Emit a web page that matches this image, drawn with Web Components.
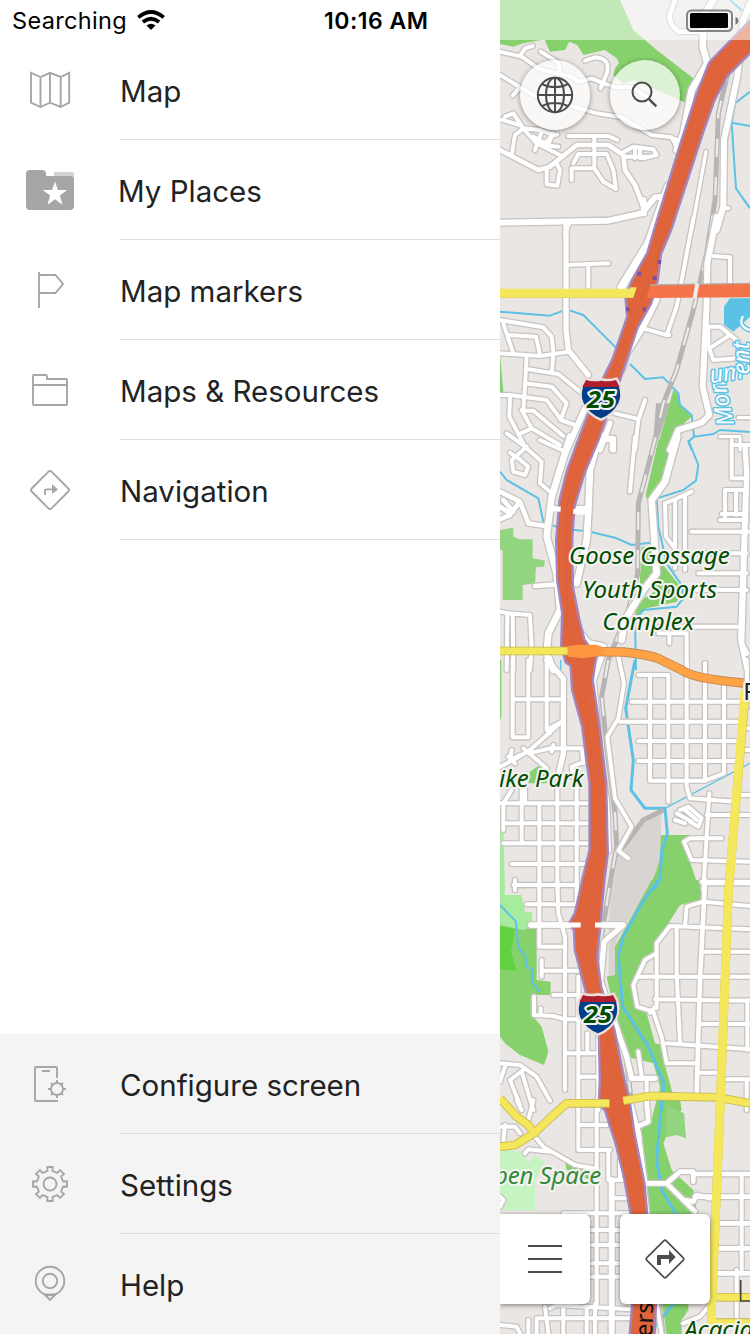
<!DOCTYPE html>
<html lang="en"><head><meta charset="utf-8"><title>Map menu</title>
<style>html,body{margin:0;height:100%;overflow:hidden}body{font-family:Inter,"Liberation Sans",sans-serif}</style></head>
<body><map-app></map-app>
<script>
const define=(name,html,after)=>customElements.define(name,class extends HTMLElement{
  connectedCallback(){ if(this.shadowRoot)return; const t=document.createElement('template'); t.innerHTML=typeof html==='function'?html(this):html;
    this.attachShadow({mode:'open'}).append(t.content.cloneNode(true)); }
});
const gear=()=>{let p='';for(let i=0;i<8;i++){const a=i*45;[[-15.5,13.2],[-10.5,13.6],[-9,17.2],[9,17.2],[10.5,13.6],[15.5,13.2]].forEach(([d,r])=>{const t=(a+d-90)*Math.PI/180;p+=(p?'L':'M')+(24+r*Math.cos(t)).toFixed(2)+' '+(24+r*Math.sin(t)).toFixed(2)})}return p+'Z'};
const ICONS={
 map:'<path d="M5 6.8 14.5 11 24 6.8 34.7 11 43.2 6.8V36.7L34.7 41 24 36.7 14.5 41 5 36.7ZM14.5 11V41M24 7V37M34.7 11V41"/>',
 places:'<g stroke="none"><path fill="#d3d3d3" d="M28 11V6H46a2 2 0 0 1 2 2V14Z"/><path fill="#a6a6a6" d="M4 4H16a4 4 0 0 1 4 4V10H44a4 4 0 0 1 4 4V40a4 4 0 0 1-4 4H4a4 4 0 0 1-4-4V8A4 4 0 0 1 4 4Z"/><path fill="#fff" d="M29 15.5 31.9 24H41.2L33.8 29.5 36.5 38.7 29 33.3 21.5 38.7 24.2 29.5 16.8 24H26.1Z"/></g>',
 flag:'<path d="M13 6V42M13 9H29.5L37 18 29.5 27H13"/>',
 folder:'<path d="M8 9H19.5Q21 9 21 10.5V13H40Q41 13 41 14V38Q41 39 40 39H8Q7 39 7 38V10Q7 9 8 9ZM7 19H41"/>',
 sign:'<path d="M22.5 5.7 5.7 22.5Q4.2 24 5.7 25.5L22.5 42.3Q24 43.8 25.5 42.3L42.3 25.5Q43.8 24 42.3 22.5L25.5 5.7Q24 4.2 22.5 5.7Z"/><path d="M19 29V24Q19 23.4 20 23.4H27"/><path fill="#a6a6a6" stroke="none" d="M26 18 32 23.4 26 28Z"/>',
 config:'<path d="M31 18V8Q31 7 30 7H10Q9 7 9 8V40Q9 41 10 41H32M16 11H24"/><circle cx="31" cy="29" r="6"/><path d="M31 20V23M31 35V38M22 29H25M37 29H40M25 23 27 25M35 33 37 35M25 35 27 33M35 25 37 23"/>',
 gear:'<path d="'+gear()+'"/><circle cx="24" cy="24" r="6.5"/>',
 help:'<circle cx="24" cy="21" r="14.3"/><circle cx="24" cy="21" r="7.2"/><path d="M18.5 34.5 24 40 29.5 34.5Z"/>'
};
define('menu-icon',e=>`<style>:host{display:block;width:48px;height:48px}svg{display:block;fill:none;stroke:#a6a6a6;stroke-width:1.9}</style><svg width="48" height="48" viewBox="0 0 48 48">${ICONS[e.getAttribute('name')]}</svg>`);
define('menu-item',e=>`<style>:host{display:grid;grid-template-columns:120px 1fr;height:100px}menu-icon{margin:26px}
div{border-bottom:1px solid #dfdfe1;height:99px;line-height:102px;font-size:29.5px;color:#222;letter-spacing:var(--ls,0);white-space:nowrap;text-indent:var(--shift,0)}
:host([last]) div{border-color:transparent}</style><menu-icon name="${e.getAttribute('icon')}"></menu-icon><div><slot></slot></div>`);
define('phone-status',`<style>:host{display:flex;height:40px;box-sizing:border-box;align-items:center;color:#000;font-size:23.5px;white-space:nowrap;padding-left:12px}
.s{width:125px;letter-spacing:.35px}.t{margin-left:159px;font-weight:600;font-size:23px;letter-spacing:.5px}span{margin-top:1px}</style><span class="s">Searching</span><svg width="28" height="20" viewBox="0 0 28 20" fill="none" stroke="#000" stroke-width="3.7"><path d="M1.3 7.3Q14-3.3 26.7 7.3M5.9 12Q14 5.5 22.1 12"/><path d="M9.5 15.5Q14 12 18.5 15.5L14 20Z" fill="#000" stroke="none"/></svg><span class="t">10:16 AM</span>`);
define('side-menu',`<style>:host{display:flex;flex-direction:column;background:#fff;height:1334px}footer{margin-top:auto;background:#f4f4f4}</style>
<phone-status></phone-status><nav><menu-item icon="map">Map</menu-item><menu-item icon="places" style="--shift:-2px">My Places</menu-item><menu-item icon="flag">Map markers</menu-item><menu-item icon="folder">Maps &amp; Resources</menu-item><menu-item icon="sign">Navigation</menu-item></nav>
<footer><menu-item icon="config">Configure screen</menu-item><menu-item icon="gear">Settings</menu-item><menu-item icon="help" last>Help</menu-item></footer>`);

/* Streets, one list per map tile; tiles are 660 units tall. "width:path" */
const ROADS=[
[ '12:M0 155 65 170 120 208 215 230 235 245 275 235 310 250 350 262 395 262 440 290 445 315','12:M62 165 75 145 98 138','12:M122 155 175 188 180 215','12:M255 182 285 172Q330 175 322 215L302 265','12:M0 225 100 285 240 325 290 340 365 352 455 405 515 412 530 440','12:M38 287 60 262',
 '12:M0 358 60 375 110 430 185 468','12:M15 350 40 340 70 385 45 405 35 465','12:M70 385 120 390 160 405 130 435 175 440M125 395 105 450M158 400 145 435 100 410M150 410 172 403',
 '14:M0 450 115 510 150 500 230 435 325 435 370 465 375 510 405 555 432 625','12:M205 408H325L352 420M283 408V500M215 540V505H283L310 545 348 567 340 510 320 462H235L220 490M170 490 180 510 172 557 140 553 140 510','12:M375 470 445 470M372 455 400 440 460 448 470 465 430 475M405 445V475M420 442V475',
 '18:M0 668 325 662 425 640 465 592 500 590M432 640 430 600M525 420 540 450','12:M210 665 195 700',
 '14:M525 0 508 50 515 75 535 95 600 95','20:M640 0 612 45 608 140 622 190 575 270 550 400 530 450','10:M618 455 575 690','18:M750 10 730 60 712 230 672 420 670 620 650 690','12:M665 625H685'],
[ '16:M198 15V270 330L205 390 265 465','12:M200 135 325 130M265 135V200','24:M505 -100 445 70 365 200','18:M650 -10 622 130 620 250 608 500 628 585 605 608 535 630 510 690','12:M580 -5 530 260 500 345 430 325M500 345H508M640 108 690 112V190','18:M470 240 430 320 380 400 365 450',
 '12:M0 300 130 322 155 350 160 395M0 400 120 408 205 395M10 310 40 400M25 345 108 350 120 405M80 405 75 500 70 570M85 448 175 462 240 515M75 490 155 500 200 550 182 600 225 615M0 525 30 525 140 540 180 595M30 530 28 590 75 680M70 572 100 572 190 648M62 640 95 625 180 675M160 405 155 460M95 625 65 570','12:M345 580 415 597M435 540 415 600 405 690','12:M625 375 625 320 660 320 715 365 715 415 640 420 628 385 690 345','18:M255 565 200 690','16:M330 610 300 690M315 655H340V690','10:M660 650H720V690M715 593H750'],
[ '20:M210 -10 155 170 140 290 170 400 180 510 145 580 140 640 160 690','20:M300 -20 270 90 265 215 260 300 230 430','14:M150 205H265M105 438 170 433M0 155 60 185 85 250 135 258M0 238 30 225 55 190M10 180 40 215M0 200 30 220','12:M20 -20 75 20 125 65 120 130 150 155M80 20 35 60 40 95 75 105 85 80 55 55 30 38M120 0 185 30M335 30V0H300M405 -10 390 155',
 '20:M532 -10 495 125 455 180 470 400 430 450 375 540 365 600','12:M575 155 520 180 495 190 498 290 520 320M525 180V385M555 170V390','20:M225 560 265 610 310 620','12:M0 515 25 520 90 525 95 620 90 690M22 525 20 690M38 525 40 690',
 '12:M575 275H750M610 340H740M595 400H740M590 450H740M475 580H560V690M480 560H720M508 580V610M615 670V690M695 0V115H740M660 240H740M675 240V150H740M708 150V225M665 222H740M700 15H750M735 150 720 600 740 690','16:M735 20 740 100 725 610 740 640'],
[ '16:M140 0 190 55V280L175 345','12:M38 0V232H85V0M38 118H190M140 0V210L185 185 90 270 40 300 0 320M140 210 150 220M70 265 140 325M25 290 45 310M35 270 30 300 60 285M85 280 150 265 245 265 250 310M155 275 160 255',
 '16:M305 -10 280 60 300 280 320 430 325 570','12:M355 -10 372 70 355 175 322 230 345 415 395 500 355 572 385 595',
 '12:M360 185H720M395 125H725M415 45H505V425M450 45V362H615L672 340V75M415 243H720M415 303H720M560 0V380L570 415 710 425M615 10V362','12:M740 0 742 140M730 205H750M735 270H750M715 405H750M620 465H750M628 400 610 690M665 535H570L552 545 575 600 750 605M605 665H750','12:M525 480 555 490M530 460 575 485M540 450 565 440 605 475 595 500 570 485M555 450 590 480',
 '12:M0 430H265M10 490H265M10 550H265M35 612H265M40 675H230M10 510V430L35 390M65 550V380M118 430V690M172 370V690M230 375V690M45 660V690M75 380V430M240 310 215 320 218 350'],
[ '12:M45 15H230M80 73H230M118 0V200H195M172 0 175 100 195 170V630M230 0V75M45 0V30','16:M92 135H242M285 135H370L312 185 302 300','16:M300 300 345 430 380 530 395 595H465','12:M415 515 425 590M125 240V290M125 272H235M160 345H245M102 350V405L160 408 195 418H245M122 385V405M235 290V690M262 460V520M195 520H300M235 590H300M295 470V690M440 600V690',
 '14:M615 0 600 300 590 640','12:M615 10H750M750 78 610 65 560 80 555 140M530 145V280L540 490M750 148 510 138 470 190V385M470 220 435 240 400 315 412 380 460 395 485 470 500 550H590M415 290H750M465 358 750 362M600 432H750M500 490 750 508M590 578H650M680 598H750M450 398 465 380M610 215H750','12:M742 360V510M740 600V690','12:M0 550 60 555 110 590 150 662M70 570 30 600 60 675M65 575 100 690M0 605 15 560'],
[ '12:M0 80 45 80 60 100M50 0 65 30M100 0 85 60M10 125 15 75M100 105 130 140 225 195 280 205M75 160 85 148 150 155M235 0V150H330M290 0V612M325 150V240M240 75H320M335 240H370M360 180V240M340 295H380M190 340H390M270 390H360M270 435H360M270 490H360M270 530H360','18:M335 240V702','14:M440 0 445 65 412 80 435 250H500L585 335M500 250 540 215H580V245M580 222H750M585 290H750M555 300 580 305 590 285 630 295M655 370H750M655 445H750M655 520H750','12:M725 225V510M710 510V660','16:M388 0 415 100 430 250 440 340',
 '12:M0 290 10 300 0 320M110 655H390M135 620 145 700M190 620V702M260 620V702M285 612V702M150 625 170 615 390 628M85 660V702M0 675 50 680 60 700M110 655V702M550 670 600 650 625 620','12:M470 612 485 702']
];
const layer=(color,extra)=>ROADS.map((t,i)=>`<g transform="translate(0 ${i*660})">`+t.map(r=>{const k=r.indexOf(':');return `<path stroke="${color}" stroke-width="${+r.slice(0,k)+extra}" d="${r.slice(k+1)}"/>`}).join('')+'</g>').join('');
const T=(i,s)=>`<g transform="translate(0 ${i*660})">${s}</g>`;
const HW='M760 55 630 190 590 290 545 430 470 675 445 760 400 840 380 895 385 950 340 1080 300 1160 238 1320 205 1410 182 1500 172 1620 175 1740 190 1840 187 1940 200 1985 215 1995 220 2070 250 2180 272 2350 272 2550 250 2640 228 2740 212 2768 225 2790 228 2850 262 2980 300 3110 303 3240 300 3310 318 3330 350 3430 375 3530 395 3640 400 3912 392 4010H460L465 3900 438 3640 430 3550 400 3400 385 3300 370 3240 340 3090 300 2960 288 2870 298 2770 310 2640 320 2560 315 2350 295 2180 275 2040 285 1970 250 1920 235 1860 215 1760 213 1620 220 1520 250 1420 292 1320 360 1130 410 980 450 910 470 840 480 760 510 690 605 400 640 300 680 225 760 145Z';
const shield=(x,y)=>`<g transform="translate(${x} ${y})"><path d="M-47-62Q-25-54 0-60 25-54 47-62L58-42Q66-10 55 12 38 48 0 63-38 48-55 12-66-10-58-42Z" fill="#eadfdc" stroke="#eadfdc" stroke-width="6"/><path d="M-54-36Q-62-8-52 12-36 44 0 58 36 44 52 12 62-8 54-36Z" fill="#003f87"/><path d="M-45-57Q-25-50 0-55 25-50 45-57L56-36H-56Z" fill="#af1e2d"/><text y="28" text-anchor="middle" font-family="Open Sans,Noto Sans" font-style="normal" font-weight="700" font-size="75" textLength="84" lengthAdjust="spacingAndGlyphs" fill="#fff" stroke="none">25</text></g>`;
define('map-canvas',()=>`<style>:host{display:block}svg{display:block;background:#eae6e3}.r path{fill:none;stroke-linecap:round;stroke-linejoin:round}.w path{fill:none;stroke:#5cc2e5;stroke-linejoin:round}
text{font-family:"Noto Sans","Open Sans",sans-serif;font-style:italic;font-size:72px;paint-order:stroke;stroke:#f5f3f1;stroke-width:12;stroke-linejoin:round;fill:#004d00}.y path{fill:none;stroke-linejoin:round}</style>
<svg width="250" height="1334" viewBox="0 0 750 4002"><g fill="#86d16c">
<path d="M0 0H360L400 90 470 150 580 235 560 310 470 270 400 240 370 252 340 225 345 205 357 190 350 175 315 150 250 165 232 135 208 125 195 150 150 155 138 130 135 118 70 130 40 140 0 132Z"/>
${T(1,'<path d="M0 400 10 515 0 520ZM520 510 540 530 540 555 575 590 540 620 510 690H470Z"/><path fill="#5cc2e5" d="M690 235H750V290L700 335 672 315V260Z"/>')}
${T(2,'<path d="M475 0H525L495 120 440 178 437 165ZM425 320H465V400L420 425ZM485 370 550 450 530 485 440 505 405 530 410 490 470 450ZM420 400H465L470 440 420 455Z"/><path fill="#92d47f" d="M0 270 40 263V290L60 298H98V355L135 362 132 380 108 382 105 430 68 435V480H8V330H0Z"/>')}
${T(3,'<path d="M0 0H4V170L0 180ZM85 370 90 335 115 318 145 340 140 370ZM480 525H575L555 560 588 660 608 665V700H440L470 630Z"/><path fill="#a7eb9e" d="M0 440H8L15 690H0Z"/><path fill="#d8d4d1" d="M485 455 480 600 465 640 440 690H340L350 600 400 510Z"/>')}
${T(4,'<path fill="#d8d4d1" d="M330 0H460L350 180 345 300H325Z"/><path d="M455 0H610L605 60 540 75 470 185V215L430 240 400 310 405 370 440 400 465 490 485 495V520L515 630 540 690H470L480 620 460 550 380 530 350 430 320 290 345 285 345 200Z"/><path d="M0 130 110 145V300L152 305V345H105L100 410 125 440 145 515 132 555 60 525 15 490 0 470Z"/><path fill="#a7eb9e" d="M0 0H10L15 45H65L75 97H97L95 140 70 150 0 135Z"/><path fill="#61d242" d="M0 138 45 147 33 215 50 272 0 268Z"/>')}
${T(5,'<path d="M470 0H540L545 30 520 60 490 130 515 210 580 270 590 330 560 350 580 345H440L430 200 410 90 450 75ZM195 185 285 205 270 240 200 210ZM485 600H565V630L545 660V702H500Z"/><path fill="#92d47f" d="M500 18 530 30 552 40 558 115 530 105 498 112Z"/><path fill="#c5f4c1" d="M0 150 70 155 85 190 105 165 135 185 105 240V330H0Z"/>')}</g>
<g class="w" stroke-width="6">${T(0,'<path d="M690 0 735 40M750 275 705 310 695 370 708 565 750 625M695 368 750 378"/>')}${T(1,'<path d="M0 275 150 287 200 268 250 285 350 385M390 432 435 477 490 472 535 520 540 555 575 585 582 650 640 642 660 630 750 636M582 650 565 665 575 690"/>')}${T(2,'<path d="M565 0 595 75 588 122 550 150 470 175 475 260 500 370 548 440 550 475 530 500 430 510 405 540 408 690M0 95 20 120 115 175 130 245 180 265 270 275 345 293 395 315 475 305"/>')}${T(3,'<path stroke-width="9" d="M405 0 377 145 400 300 393 390 435 445H495L502 520 485 575 480 655 462 690"/><path stroke-width="4" d="M495 445 750 310M182 0V30"/>')}${T(4,'<path stroke-width="9" d="M475 0 425 70 370 170 355 230 368 380 445 500 492 610 485 690"/><path d="M0 75 48 125 55 205 75 225 80 260 97 270 95 305 118 335"/>')}${T(5,'<path stroke-width="9" d="M485 0 470 180 485 270 530 345M520 612 465 680"/>')}</g>
<g fill="none" stroke="#b6b5b3" stroke-width="15"><path id="rail" d="M690 190 655 340 645 600 620 760 580 930 530 1110 490 1210 465 1320 415 1510 413 1720 385 1830 325 1980 305 2090 320 2240 345 2440 350 2540 325 2680 295 2870 310 2970 375 3150 400 3350 440 3640 490 4002M490 2430 430 2460 385 2520 345 2570"/></g>
<path fill="#b6b5b3" d="M468 1210H510L475 1320H460Z"/><path fill="none" stroke="#eceae8" stroke-width="7" stroke-dasharray="55 60" d="M690 190 655 340 645 600 620 760 580 930 530 1110 490 1210 465 1320 415 1510 413 1720 385 1830 325 1980 305 2090 320 2240 345 2440 350 2540 325 2680 295 2870 310 2970 375 3150 400 3350 440 3640 490 4002"/>
<g class="r">${layer('#cdc9c6',8)}${layer('#c0bcba',3)}${layer('#fff',0)}</g>
<path d="${HW}" fill="#a286bf" stroke="#a286bf" stroke-width="14"/><path d="${HW}" fill="#df643b"/>
<path fill="none" stroke="#d95e37" stroke-width="2" d="M720 140 640 250 520 640 430 880 260 1320 200 1520 200 1860 250 2060 292 2400 290 2600 260 2800 320 3100 345 3300 420 3640"/>
<g fill="#7750a0"><path d="M412 815h12v12h-12ZM473 780h10v12h-10ZM458 828h12v12h-12ZM378 922h10v12h-10ZM428 922h10v12h-10Z"/></g>
<path d="M150 1526 182 1528M220 1534 265 1538M92 2775H242M285 2775H370" stroke="#fff" stroke-width="15"/>
<g class="y" stroke="#c6b64c" stroke-width="26"><path d="M0 881H400"/><path d="M0 1953H205M735 2090 700 2500 685 2680 660 3330 635 3920V4010" /><path d="M0 3295 50 3350 85 3375 102 3400 155 3350 200 3310H328M0 3440 45 3435 102 3400M370 3302 450 3288 650 3292 750 3310M650 3892H750M635 3968H750"/></g>
<g class="y" stroke="#f5e75b" stroke-width="21"><path stroke-width="27" d="M0 880H400"/><path d="M0 1953H205"/><path stroke-width="26" d="M735 2070 700 2500 685 2680 660 3330 635 3920V4010"/><path d="M0 3295 50 3350 85 3375 102 3400 155 3350 200 3310H328M0 3440 45 3435 102 3400M370 3302 450 3288 650 3292 750 3310M650 3892H750M635 3968H750"/></g>
<path fill="#f5e75b" d="M390 862H410L402 888H390Z"/><path d="M450 855 750 850V892L440 894Z" fill="#f57349"/><path d="M450 855 750 850" stroke="#b5a9a2" stroke-width="4"/><path d="M592 850 584 895" stroke="#eee" stroke-width="12"/>
<path d="M210 1954 370 1956Q455 1965 480 1978L545 2010Q580 2036 730 2049" fill="none" stroke="#c3884f" stroke-width="28"/><path d="M202 1954 370 1956Q455 1965 480 1978L545 2010Q580 2036 730 2049" fill="none" stroke="#ffa346" stroke-width="23"/><path d="M205 1938 240 1934H290L310 1942V1966L250 1975 205 1970Z" fill="#fc9640"/>
${shield(303,1197)}${shield(294,3042)}
<text x="207" y="1692" textLength="482">Goose Gossage</text><text x="247" y="1794" textLength="404">Youth Sports</text><text x="307" y="1890" textLength="276">Complex</text>
<text x="-3" y="2360" textLength="254">ike Park</text><text x="-18" y="3552" textLength="322" style="fill:#338a38">pen Space</text><text x="553" y="4014">Acacia</text>
<g style="font-size:72px"><text transform="translate(456 4012) rotate(-88)" style="font-style:normal;fill:#111;stroke:#df643b;stroke-width:8">ers</text>
<text x="730" y="2100" style="font-style:normal;fill:#222">F</text><path d="M722 3840V3903H760" fill="none" stroke="#444" stroke-width="5"/>
<g id="creek"><text transform="translate(702 1273) rotate(-102)" class="c">Mon</text><text transform="translate(632 1150) rotate(-9)" class="c">um</text><text transform="translate(748 1123) rotate(-91)" class="c">ent</text><text transform="translate(762 1002) rotate(-75)" class="c">C</text></g></g>
</svg><style>.c{fill:#fff;stroke:#5cc2e5;stroke-width:9;font-size:70px}</style>`);
define('round-button',`<style>:host{display:grid;place-items:center;width:70px;height:70px;border-radius:50%;background:rgba(255,255,255,.71);box-shadow:0 1px 5px rgba(0,0,0,.4)}</style><slot></slot>`);
define('square-button',`<style>:host{display:grid;place-items:center;width:90px;height:90px;border-radius:6px;background:#fff;box-shadow:0 1px 5px rgba(0,0,0,.5)}</style><slot></slot>`);
define('map-view',`<style>:host{display:block;position:relative;width:250px;height:1334px;overflow:hidden}svg{fill:none;stroke:#4c4c4c;stroke-width:2;display:block}
.top{position:absolute;inset:0 0 auto 0;height:40px;background:rgba(255,255,255,.51);display:flex;justify-content:flex-end;padding:9px 10px 0 0;box-sizing:border-box}
.tools,.bottom{position:absolute;display:flex}.tools{left:20px;top:60px;gap:20px}.bottom{left:0;top:1214px;gap:30px}</style>
<map-canvas></map-canvas><div class="top"><svg width="54" height="24" viewBox="0 0 54 24"><rect x="1" y="1.5" width="45" height="20.5" rx="4.5" stroke="#858585"/><rect x="4" y="4" width="38" height="15" rx="1.5" fill="#000" stroke="none"/><path d="M49.5 8Q52.5 9 52.5 11.7T49.5 15.5Z" fill="#777" stroke="none"/></svg></div>
<div class="tools"><round-button><svg width="40" height="40" viewBox="0 0 40 40"><circle cx="20" cy="20" r="17.2"/><ellipse cx="20" cy="20" rx="9" ry="17.2"/><path d="M20 3V37M3 20H37M7 8.8Q12 12 20 12T33 8.8M7 31.2Q12 28 20 28T33 31.2"/></svg></round-button><round-button><svg width="40" height="40" viewBox="0 0 40 40"><circle cx="17" cy="17" r="9.5"/><path d="M23.8 23.8 31.3 31.3" stroke-width="2.5"/></svg></round-button></div>
<div class="bottom"><square-button style="border-radius:0 6px 6px 0"><svg width="40" height="40" viewBox="0 0 40 40"><path d="M3 7H37M3 20H37M3 33H37"/></svg></square-button><square-button><svg width="40" height="40" viewBox="0 0 40 40"><path d="M18.7 1.9 1.9 18.7Q.5 20 1.9 21.3L18.7 38.1Q20 39.5 21.3 38.1L38.1 21.3Q39.5 20 38.1 18.7L21.3 1.9Q20 .5 18.7 1.9Z" stroke-width="1.7"/><path d="M12 26V16.8Q12 16 13 16H24V11L30.6 18 24 25V20H16V26Z" fill="#4c4c4c" stroke="none"/></svg></square-button></div>`);
define('map-app',`<style>:host{display:grid;grid-template-columns:500px 250px;height:1334px;overflow:hidden}</style><side-menu></side-menu><map-view></map-view>`);
</script></body></html>
